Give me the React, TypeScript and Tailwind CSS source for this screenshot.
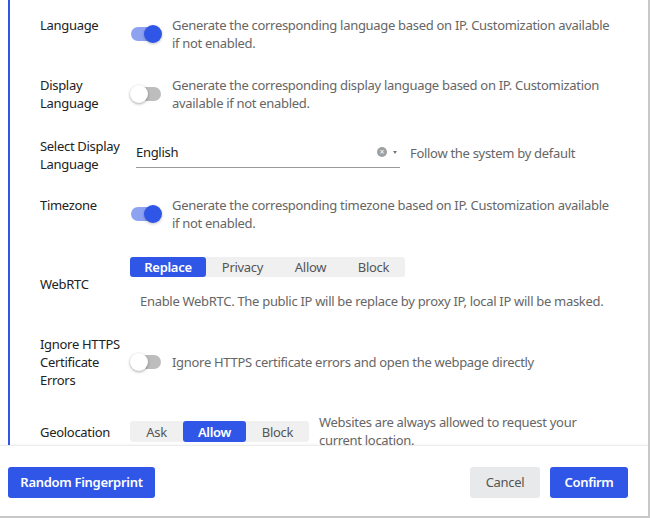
import React from "react";

const FONT = { fontFamily: '"Noto Sans", "Open Sans", Arial, sans-serif' };

function Toggle({ on }: { on: boolean }) {
  return (
    <div className="relative w-[32px] h-[18px] flex items-center shrink-0">
      <div className={`w-[30px] h-[14px] rounded-full ml-[1px] ${on ? "bg-[#8ea2f2]" : "bg-[#bdbdbd]"}`} />
      <div
        className={`absolute top-0 w-[18px] h-[18px] rounded-full ${
          on ? "left-[14px] bg-[#3056e8] shadow-[0_1px_3px_rgba(0,0,0,0.25)]" : "left-0 bg-white shadow-[0_1px_3px_rgba(0,0,0,0.35)]"
        }`}
      />
    </div>
  );
}

function Segmented({
  items,
  active,
  widths,
  className,
}: {
  items: string[];
  active: number;
  widths: string[];
  className: string;
}) {
  return (
    <div className={`flex bg-[#f0f0f0] rounded-[3px] ${className}`}>
      {items.map((it, i) => (
        <div
          key={it}
          className={`${widths[i]} flex items-center justify-center rounded-[3px] text-[13px] ${
            i === active ? "bg-[#3056e8] text-white font-semibold" : "text-[#555]"
          }`}
        >
          {it}
        </div>
      ))}
    </div>
  );
}

export default function App() {
  return (
    <div className="w-[650px] h-[518px] bg-white border-r-2 border-b-2 border-[#c8c8c8] flex flex-col overflow-hidden tracking-[-0.3px]" style={FONT}>
      <div className="h-[445px] flex overflow-hidden">
        <div className="w-[8px]" />
        <div className="w-[2px] bg-[#3056e8]" />
        <div className="flex-1 pl-[30px] pt-[16px] text-[13px] leading-[18px] text-[#222]">
          {/* Language */}
          <div className="flex h-[36px]">
            <div className="w-[90px]">Language</div>
            <div className="self-center"><Toggle on /></div>
            <div className="ml-[10px] text-[#666] w-[440px]">
              Generate the corresponding language based on IP. Customization available if not enabled.
            </div>
          </div>

          {/* Display Language */}
          <div className="flex h-[36px] mt-[24px]">
            <div className="w-[90px]">Display<br />Language</div>
            <div className="self-center"><Toggle on={false} /></div>
            <div className="ml-[10px] text-[#666] w-[430px]">
              Generate the corresponding display language based on IP. Customization available if not enabled.
            </div>
          </div>

          {/* Select Display Language */}
          <div className="flex h-[36px] mt-[25px]">
            <div className="w-[96px]">Select Display<br />Language</div>
            <div className="w-[264px] h-[31px] border-b border-[#9a9a9a] flex items-center">
              <span className="flex-1 text-[#222]">English</span>
              <span className="w-[10px] h-[10px] rounded-full bg-[#a0a0a0] flex items-center justify-center text-white text-[8px] leading-none mr-[6px]">×</span>
              <span className="w-0 h-0 border-l-[2.5px] border-r-[2.5px] border-t-[3px] border-l-transparent border-r-transparent border-t-[#777] mr-[3px]" />
            </div>
            <div className="ml-[10px] pt-[7px] text-[#666]">Follow the system by default</div>
          </div>

          {/* Timezone */}
          <div className="flex h-[36px] mt-[23px]">
            <div className="w-[90px]">Timezone</div>
            <div className="self-center"><Toggle on /></div>
            <div className="ml-[10px] text-[#666] w-[440px]">
              Generate the corresponding timezone based on IP. Customization available if not enabled.
            </div>
          </div>

          {/* WebRTC */}
          <div className="flex h-[53px] mt-[25px] items-center">
            <div className="w-[90px] pt-[1px]">WebRTC</div>
            <div className="flex flex-col h-full">
              <Segmented
                items={["Replace", "Privacy", "Allow", "Block"]}
                active={0}
                widths={["w-[76px]", "w-[73px]", "w-[63px]", "w-[63px]"]}
                className="h-[20px] self-start"
              />
              <div className="mt-[15px] ml-[10px] text-[#666]">
                Enable WebRTC. The public IP will be replace by proxy IP, local IP will be masked.
              </div>
            </div>
          </div>

          {/* Ignore HTTPS */}
          <div className="flex h-[54px] mt-[25px] items-center">
            <div className="w-[90px]">Ignore HTTPS<br />Certificate<br />Errors</div>
            <Toggle on={false} />
            <div className="ml-[10px] text-[#666]">Ignore HTTPS certificate errors and open the webpage directly</div>
          </div>

          {/* Geolocation */}
          <div className="flex h-[36px] mt-[24px] items-center">
            <div className="w-[90px] pt-[1px]">Geolocation</div>
            <Segmented
              items={["Ask", "Allow", "Block"]}
              active={1}
              widths={["w-[53px]", "w-[63px]", "w-[63px]"]}
              className="h-[21px] mt-[1px]"
            />
            <div className="ml-[10px] text-[#666] w-[265px]">
              Websites are always allowed to request your current location.
            </div>
          </div>
        </div>
      </div>

      <div className="flex-1 border-t border-[#ececec] shadow-[0_-1px_2px_rgba(0,0,0,0.04)] flex items-start pt-[21px] px-[8px] text-[13px]">
        <button className="h-[31px] w-[147px] rounded-[3px] bg-[#3056e8] text-white font-semibold">Random Fingerprint</button>
        <div className="flex-1" />
        <button className="h-[31px] w-[70px] rounded-[3px] bg-[#e8e9eb] text-[#555]">Cancel</button>
        <button className="h-[31px] w-[78px] rounded-[3px] bg-[#3056e8] text-white font-semibold ml-[10px] mr-[12px]">Confirm</button>
      </div>
    </div>
  );
}
